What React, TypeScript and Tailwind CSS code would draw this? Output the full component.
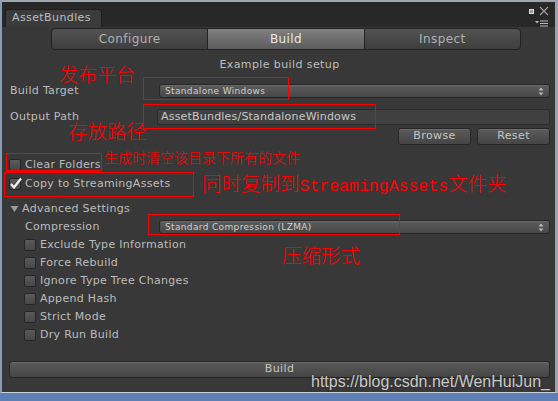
import React from "react";

const ui = { fontFamily: '"DejaVu Sans", "Liberation Sans", sans-serif' };
const cjk = { fontFamily: '"Noto Sans CJK SC", sans-serif', fontWeight: 300 };

function Arrows() {
  return (
    <svg width="6" height="9" viewBox="0 0 6 9" className="shrink-0">
      <path d="M3 0.5 L5.5 3.5 L0.5 3.5 Z" fill="#b8b8b8" />
      <path d="M3 8.5 L5.5 5.5 L0.5 5.5 Z" fill="#b8b8b8" />
    </svg>
  );
}

function Dropdown({ text }: { text: string }) {
  return (
    <div className="flex-1 h-[14px] flex items-center justify-between pl-[5px] pr-[5px] rounded-[3px] border border-[#262626] bg-gradient-to-b from-[#5c5c5c] to-[#474747] shadow-[inset_0_1px_0_#6a6a6a]">
      <span className="text-[9px] tracking-[0.35px] text-[#d0d0d0] leading-none">{text}</span>
      <Arrows />
    </div>
  );
}

function Check({ checked }: { checked?: boolean }) {
  return (
    <div className="w-[12px] h-[12px] rounded-[2px] border border-[#252525] bg-gradient-to-b from-[#5a5a5a] to-[#474747] shrink-0 relative">
      {checked && (
        <svg width="14" height="13" viewBox="0 0 14 13" className="absolute left-[-1px] top-[-2px]">
          <path d="M2 7 L5 10.5 L12 1.5" stroke="#f4f4f4" strokeWidth="2.2" fill="none" />
        </svg>
      )}
    </div>
  );
}

function CheckRow({ label }: { label: string }) {
  return (
    <div className="h-[18px] flex items-center pl-[22px] gap-[4px]">
      <Check />
      <span className="text-[11px] text-[#bcbcbc] tracking-[0.3px]">{label}</span>
    </div>
  );
}

function Btn({ children, className }: { children: React.ReactNode; className?: string }) {
  return (
    <div
      className={
        "h-[17px] flex items-center justify-center rounded-[3px] border border-[#252525] bg-gradient-to-b from-[#5a5a5a] to-[#454545] shadow-[inset_0_1px_0_#6c6c6c] text-[11px] text-[#c4c4c4] tracking-[0.4px] " +
        (className || "")
      }
    >
      {children}
    </div>
  );
}

export default function App() {
  return (
    <div className="relative w-[558px] h-[401px] bg-[#5d7fb4] overflow-hidden" style={ui}>
      <div className="h-[393px] border-t-2 border-l-2 border-r-[3px] border-b border-t-[#9ea6b0] border-l-[#8a9bb4] border-r-[#9aa4b0] border-b-[#c9d1da] bg-[#383838] flex flex-col">
        {/* header */}
        <div className="h-[25px] bg-[#282828] flex items-end relative shrink-0">
          <div className="ml-[3px] w-[97px] h-[18px] bg-[#3b3b3b] rounded-t-[3px] border border-b-0 border-[#1e1e1e] flex items-center pl-[6px]">
            <span className="text-[11px] text-[#bdbdbd] tracking-[0.4px]">AssetBundles</span>
          </div>
          <div className="absolute right-[6px] top-[4px] flex items-center gap-[5px]">
            <div className="w-[5px] h-[5px] bg-[#999] border border-[#ddd]" />
            <svg width="10" height="10" viewBox="0 0 10 10">
              <path d="M1 1 L9 9 M9 1 L1 9" stroke="#9a9a9a" strokeWidth="1.2" />
            </svg>
          </div>
          <div className="absolute right-[6px] top-[18px]">
            <svg width="14" height="7" viewBox="0 0 14 7">
              <path d="M0 1 L4 1 L2 3.5 Z" fill="#bbb" />
              <path d="M5 1 H13 M5 3.5 H13 M5 6 H13" stroke="#bbb" strokeWidth="1.2" />
            </svg>
          </div>
        </div>

        {/* toolbar */}
        <div className="mt-[1px] ml-[49px] w-[470px] h-[22px] flex shrink-0">
          <div className="flex-1 rounded-l-[4px] border border-[#222] bg-gradient-to-b from-[#525252] to-[#3e3e3e] flex items-center justify-center text-[12px] text-[#b0b0b0] tracking-[0.4px]">
            Configure
          </div>
          <div className="flex-1 border-y border-[#222] bg-gradient-to-b from-[#808080] to-[#5c5c5c] flex items-center justify-center text-[12px] text-[#e8e8e8] tracking-[0.4px]">
            Build
          </div>
          <div className="flex-1 rounded-r-[4px] border border-[#222] bg-gradient-to-b from-[#525252] to-[#3e3e3e] flex items-center justify-center text-[12px] text-[#b0b0b0] tracking-[0.4px]">
            Inspect
          </div>
        </div>

        <div className="mt-[7px] h-[16px] flex items-center justify-center shrink-0">
          <span className="text-[11px] text-[#bcbcbc] tracking-[0.4px] ml-[2px]">Example build setup</span>
        </div>

        <div className="mt-[10px] h-[16px] flex items-center pl-[8px] pr-[5px] shrink-0">
          <span className="w-[149px] text-[11px] text-[#bcbcbc] tracking-[0.3px]">Build Target</span>
          <Dropdown text="Standalone Windows" />
        </div>

        <div className="mt-[10px] h-[16px] flex items-center pl-[8px] pr-[5px] shrink-0">
          <span className="w-[147px] text-[11px] text-[#bcbcbc] tracking-[0.3px]">Output Path</span>
          <div className="flex-1 h-[16px] bg-[#404040] border border-[#2a2a2a] rounded-[2px] flex items-center pl-[3px]">
            <span className="text-[11px] text-[#c8c8c8] tracking-[0.2px]">AssetBundles/StandaloneWindows</span>
          </div>
        </div>

        <div className="mt-[3px] h-[17px] flex justify-end pr-[5px] gap-[6px] shrink-0">
          <Btn className="w-[73px]">Browse</Btn>
          <Btn className="w-[73px]">Reset</Btn>
        </div>

        <div className="mt-[12px] h-[16px] flex items-center pl-[7px] gap-[4px] shrink-0">
          <Check />
          <span className="text-[11px] text-[#bcbcbc] tracking-[0.3px]">Clear Folders</span>
        </div>
        <div className="mt-[3px] h-[16px] flex items-center pl-[7px] gap-[4px] shrink-0">
          <Check checked />
          <span className="text-[11px] text-[#bcbcbc] tracking-[0.3px]">Copy to StreamingAssets</span>
        </div>

        <div className="mt-[9px] h-[16px] flex items-center pl-[8px] gap-[3px] shrink-0">
          <svg width="9" height="8" viewBox="0 0 9 8">
            <path d="M0.5 1 L8.5 1 L4.5 7 Z" fill="#9a9a9a" />
          </svg>
          <span className="text-[11px] text-[#bcbcbc] tracking-[0.3px]">Advanced Settings</span>
        </div>

        <div className="mt-[2px] h-[16px] flex items-center pl-[23px] pr-[5px] shrink-0">
          <span className="w-[134px] text-[11px] text-[#bcbcbc] tracking-[0.3px]">Compression</span>
          <Dropdown text="Standard Compression (LZMA)" />
        </div>

        <div className="mt-[1px] flex flex-col shrink-0">
          <CheckRow label="Exclude Type Information" />
          <CheckRow label="Force Rebuild" />
          <CheckRow label="Ignore Type Tree Changes" />
          <CheckRow label="Append Hash" />
          <CheckRow label="Strict Mode" />
          <CheckRow label="Dry Run Build" />
        </div>

        <div className="mt-[17px] pl-[7px] pr-[5px] shrink-0">
          <Btn className="w-full">Build</Btn>
        </div>
      </div>

      {/* annotations */}
      <div className="absolute left-[143px] top-[77px] w-[146px] h-[23px] border border-[#ff0000]" />
      <div className="absolute left-[143px] top-[104px] w-[233px] h-[25px] border border-[#ff0000]" />
      <div className="absolute left-[6px] top-[153px] w-[96px] h-[18px] border border-[#ff0000]" />
      <div className="absolute left-[4px] top-[172px] w-[190px] h-[25px] border border-[#ff0000]" />
      <div className="absolute left-[148px] top-[214px] w-[252px] h-[21px] border border-[#ff0000]" />

      <div className="absolute left-[59px] top-[62px] text-[19px] leading-[24px] text-[#ff0000]" style={cjk}>发布平台</div>
      <div className="absolute left-[68px] top-[119px] text-[19.5px] leading-[24px] text-[#ff0000]" style={cjk}>存放路径</div>
      <div className="absolute left-[104px] top-[147px] text-[14px] leading-[20px] text-[#ff0000]" style={cjk}>生成时清空该目录下所有的文件</div>
      <div className="absolute left-[202px] top-[171px] text-[19.5px] leading-[24px] text-[#ff0000] whitespace-nowrap" style={cjk}>
        同时复制到
        <span className="text-[16.5px]" style={{ fontFamily: '"Liberation Mono", monospace', fontWeight: 400 }}>StreamingAssets</span>
        文件夹
      </div>
      <div className="absolute left-[282px] top-[243px] text-[19.5px] leading-[24px] text-[#ff0000]" style={cjk}>压缩形式</div>

      <div
        className="absolute left-[311px] top-[372px] text-[16px] leading-[20px] text-[#c8c8c8] [text-shadow:0_0_2px_#2a2a2a]"
        style={{ fontFamily: '"Liberation Sans", Arial, sans-serif' }}
      >
        https://blog.csdn.net/WenHuiJun_
      </div>
    </div>
  );
}
